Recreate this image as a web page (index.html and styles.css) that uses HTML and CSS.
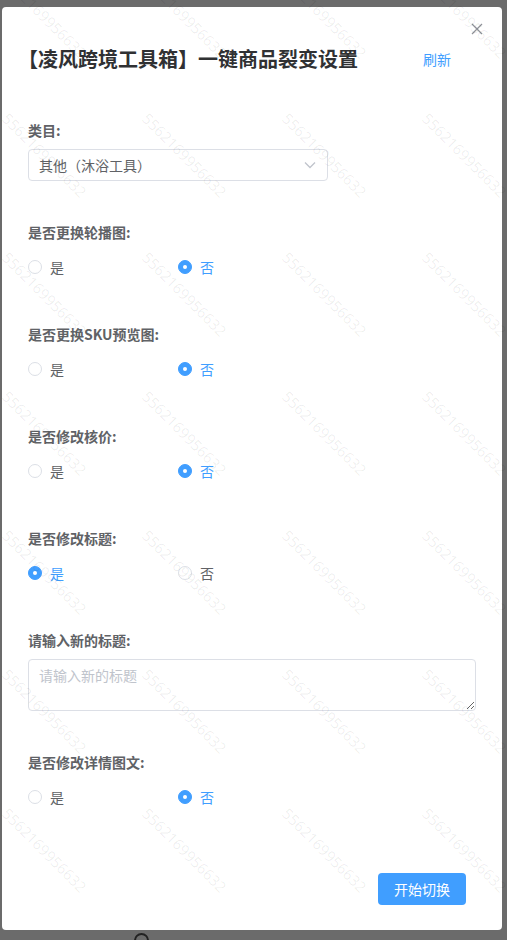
FILE: index.html
```html
<!DOCTYPE html>
<html lang="zh-CN">
<head>
<meta charset="utf-8">
<title>一键商品裂变设置</title>
<link rel="stylesheet" href="styles.css">
</head>
<body>
<div class="page">
  <div class="modal">
    <button class="close" type="button" aria-label="关闭">
      <svg width="14" height="14" viewBox="0 0 14 14"><path d="M2 2 L12 12 M12 2 L2 12" stroke="#909399" stroke-width="1.3" fill="none"/></svg>
    </button>
    <div class="header">
      <h2 class="title">【凌风跨境工具箱】一键商品裂变设置</h2>
      <a class="refresh">刷新</a>
    </div>
    <div class="form">
      <div class="item">
        <div class="label">类目:</div>
        <div class="select">
          <span>其他（沐浴工具）</span>
          <svg class="chev" width="12" height="8" viewBox="0 0 12 8"><path d="M1 1.5 L6 6.5 L11 1.5" stroke="#c0c4cc" stroke-width="1.3" fill="none"/></svg>
        </div>
      </div>
      <div class="item">
        <div class="label">是否更换轮播图:</div>
        <div class="radios">
          <span class="radio"><span class="dot"></span><span class="rtext">是</span></span>
          <span class="radio on"><span class="dot"></span><span class="rtext">否</span></span>
        </div>
      </div>
      <div class="item">
        <div class="label">是否更换SKU预览图:</div>
        <div class="radios">
          <span class="radio"><span class="dot"></span><span class="rtext">是</span></span>
          <span class="radio on"><span class="dot"></span><span class="rtext">否</span></span>
        </div>
      </div>
      <div class="item">
        <div class="label">是否修改核价:</div>
        <div class="radios">
          <span class="radio"><span class="dot"></span><span class="rtext">是</span></span>
          <span class="radio on"><span class="dot"></span><span class="rtext">否</span></span>
        </div>
      </div>
      <div class="item">
        <div class="label">是否修改标题:</div>
        <div class="radios">
          <span class="radio on"><span class="dot"></span><span class="rtext">是</span></span>
          <span class="radio"><span class="dot"></span><span class="rtext">否</span></span>
        </div>
      </div>
      <div class="item">
        <div class="label">请输入新的标题:</div>
        <textarea class="textarea" placeholder="请输入新的标题"></textarea>
      </div>
      <div class="item">
        <div class="label">是否修改详情图文:</div>
        <div class="radios">
          <span class="radio"><span class="dot"></span><span class="rtext">是</span></span>
          <span class="radio on"><span class="dot"></span><span class="rtext">否</span></span>
        </div>
      </div>
    </div>
    <div class="footer">
      <button class="btn" type="button">开始切换</button>
    </div>
  </div>
  <div class="bottombar"><span class="ring"></span></div>
  <div class="watermark">
    <span>5562169956632</span><span>5562169956632</span><span>5562169956632</span><span>5562169956632</span>
    <span>5562169956632</span><span>5562169956632</span><span>5562169956632</span><span>5562169956632</span>
    <span>5562169956632</span><span>5562169956632</span><span>5562169956632</span><span>5562169956632</span>
    <span>5562169956632</span><span>5562169956632</span><span>5562169956632</span><span>5562169956632</span>
    <span>5562169956632</span><span>5562169956632</span><span>5562169956632</span><span>5562169956632</span>
    <span>5562169956632</span><span>5562169956632</span><span>5562169956632</span><span>5562169956632</span>
    <span>5562169956632</span><span>5562169956632</span><span>5562169956632</span><span>5562169956632</span>
  </div>
</div>
</body>
</html>
```
FILE: styles.css
```css
* { box-sizing: border-box; }
html, body {
  margin: 0;
  padding: 0;
}
body {
  background: #6b6b6b;
  font-family: "Noto Sans CJK SC", "Noto Sans", sans-serif;
  width: 507px;
  height: 940px;
  overflow: hidden;
}
.page {
  position: relative;
  width: 507px;
  height: 940px;
  overflow: hidden;
  padding-top: 7px;
}
.modal {
  position: relative;
  margin-left: 2px;
  width: 500px;
  height: 923px;
  background: #fff;
  border-radius: 4px;
  display: flex;
  flex-direction: column;
}
.close {
  position: absolute;
  top: 15px;
  right: 18px;
  width: 14px;
  height: 14px;
  padding: 0;
  border: none;
  background: none;
  display: flex;
}
.header {
  display: flex;
  align-items: center;
  padding: 38px 51px 0 16px;
}
.title {
  margin: 0;
  font-size: 20px;
  line-height: 28px;
  font-weight: 700;
  color: #303133;
}
.refresh {
  margin-left: auto;
  font-size: 14px;
  line-height: 20px;
  color: #409eff;
}
.form {
  padding: 47px 26px 0 26px;
  display: flex;
  flex-direction: column;
}
.item {
  display: flex;
  flex-direction: column;
  margin-bottom: 41px;
}
.item:last-child { margin-bottom: 0; }
.label {
  font-size: 14px;
  line-height: 20px;
  font-weight: 700;
  color: #606266;
  margin-bottom: 9px;
}
.select {
  width: 300px;
  height: 32px;
  border: 1px solid #dcdfe6;
  border-radius: 4px;
  padding: 0 11px 0 10px;
  display: flex;
  align-items: center;
  justify-content: space-between;
  font-size: 14px;
  color: #606266;
}
.radios {
  height: 32px;
  display: flex;
  align-items: center;
}
.radio {
  width: 150px;
  display: flex;
  align-items: center;
  font-size: 14px;
  color: #606266;
}
.dot {
  width: 14px;
  height: 14px;
  border: 1px solid #dcdfe6;
  border-radius: 50%;
  background: #fff;
  display: flex;
  align-items: center;
  justify-content: center;
}
.rtext {
  margin-left: 8px;
  line-height: 20px;
}
.radio.on { color: #409eff; }
.radio.on .dot {
  background: #409eff;
  border-color: #409eff;
}
.radio.on .dot::after {
  content: "";
  width: 4px;
  height: 4px;
  border-radius: 50%;
  background: #fff;
}
.textarea {
  width: 100%;
  height: 52px;
  border: 1px solid #dcdfe6;
  border-radius: 4px;
  padding: 5px 10px;
  font-family: "Noto Sans CJK SC", "Noto Sans", sans-serif;
  font-size: 14px;
  line-height: 21px;
  color: #606266;
  resize: vertical;
  outline: none;
  display: block;
}
.textarea::placeholder { color: #c0c4cc; }
.footer {
  display: flex;
  justify-content: flex-end;
  padding: 60px 36px 0 0;
}
.btn {
  width: 88px;
  height: 32px;
  border: none;
  border-radius: 4px;
  background: #409eff;
  color: #fff;
  font-family: "Noto Sans CJK SC", "Noto Sans", sans-serif;
  font-size: 14px;
  padding: 0;
}
.bottombar {
  height: 10px;
  padding-left: 134px;
  padding-top: 3px;
}
.ring {
  display: block;
  width: 15px;
  height: 15px;
  border: 2px solid #222;
  border-radius: 50%;
}
.watermark {
  position: absolute;
  top: -54px;
  left: -25px;
  display: grid;
  grid-template-columns: repeat(4, 140px);
  grid-auto-rows: 139px;
  pointer-events: none;
  z-index: 10;
}
.watermark span {
  display: flex;
  align-items: center;
  justify-content: center;
  transform: rotate(45deg);
  font-family: "Open Sans", sans-serif;
  font-size: 15px;
  color: rgba(0, 0, 0, 0.07);
  white-space: nowrap;
}
```
